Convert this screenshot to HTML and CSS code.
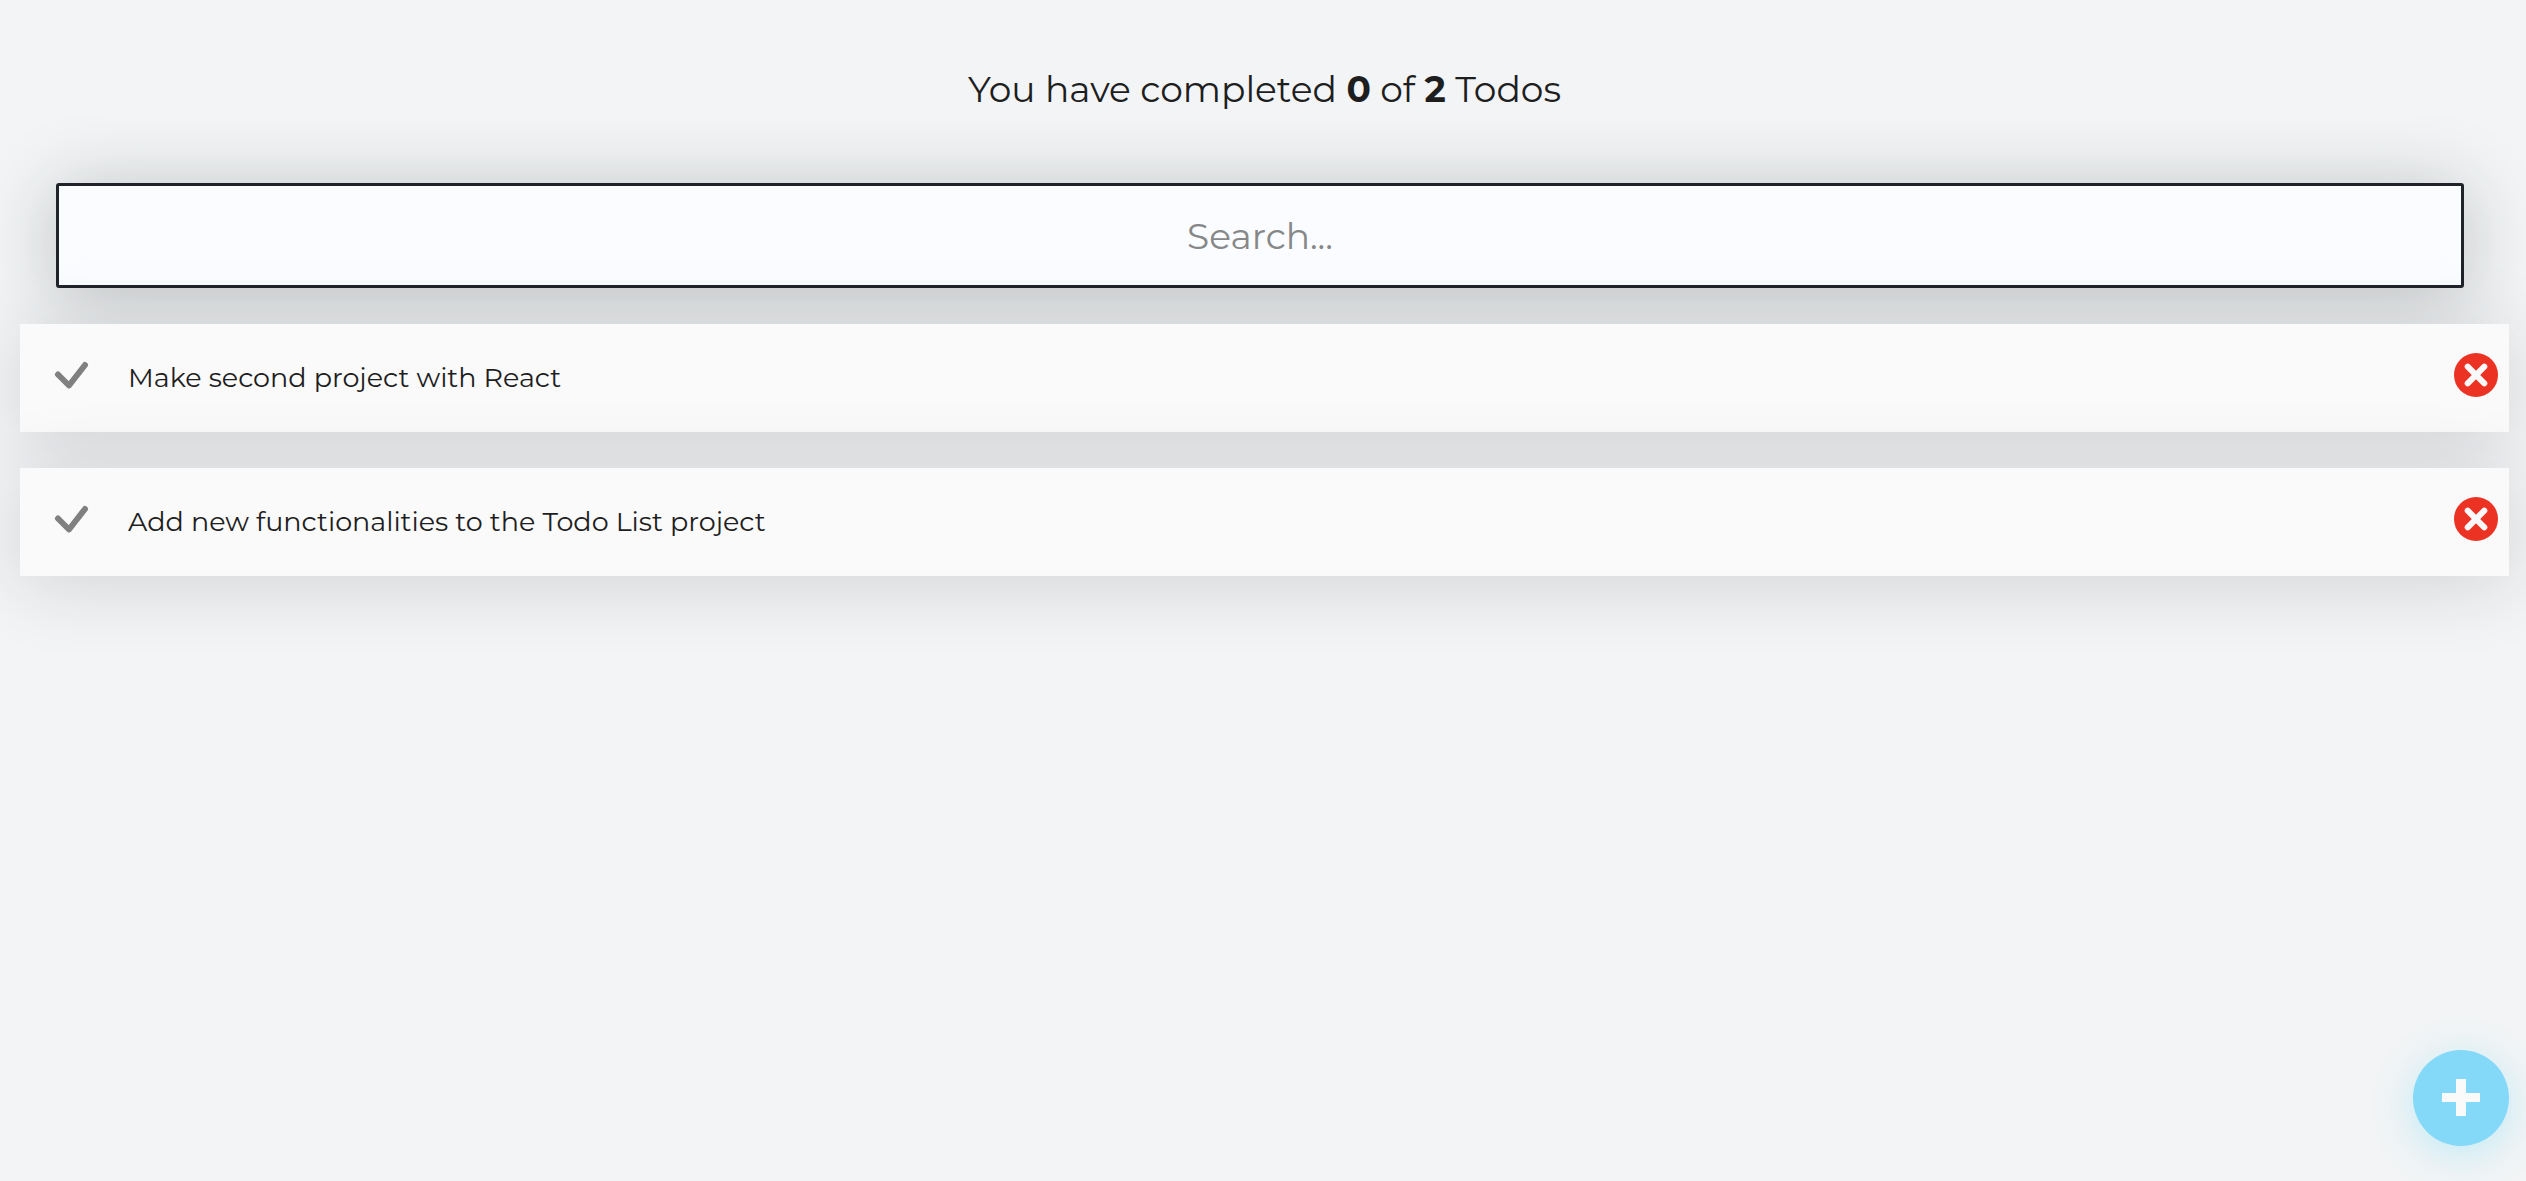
FILE: index.html
```html
<!DOCTYPE html>
<html lang="en">
<head>
  <meta charset="utf-8">
  <meta name="viewport" content="width=device-width, initial-scale=1">
  <title>Todo List</title>
  <link rel="stylesheet" href="styles.css">
</head>
<body>
  <main class="app">
    <h1 class="counter">You have completed <strong>0</strong> of <strong>2</strong> Todos</h1>
    <input class="search" type="text" placeholder="Search..." aria-label="Search todos">
    <ul class="todos">
      <li class="todo">
        <button class="icon-button" type="button" aria-label="Complete: Make second project with React">
          <svg class="check" viewBox="0 0 36 36" aria-hidden="true"><path d="M4 17.5 L15 28.5 L31 8"/></svg>
        </button>
        <p class="todo-text">Make second project with React</p>
        <button class="icon-button" type="button" aria-label="Delete: Make second project with React">
          <svg class="delete" viewBox="0 0 44 44" aria-hidden="true"><circle cx="22" cy="22" r="22"/><path d="M13.7 13.7 L30.3 30.3 M30.3 13.7 L13.7 30.3"/></svg>
        </button>
      </li>
      <li class="todo">
        <button class="icon-button" type="button" aria-label="Complete: Add new functionalities to the Todo List project">
          <svg class="check" viewBox="0 0 36 36" aria-hidden="true"><path d="M4 17.5 L15 28.5 L31 8"/></svg>
        </button>
        <p class="todo-text">Add new functionalities to the Todo List project</p>
        <button class="icon-button" type="button" aria-label="Delete: Add new functionalities to the Todo List project">
          <svg class="delete" viewBox="0 0 44 44" aria-hidden="true"><circle cx="22" cy="22" r="22"/><path d="M13.7 13.7 L30.3 30.3 M30.3 13.7 L13.7 30.3"/></svg>
        </button>
      </li>
    </ul>
  </main>
  <button class="add" type="button" aria-label="Add todo">
    <svg class="plus" viewBox="0 0 38 38" aria-hidden="true"><path d="M14 0 H24 V14 H38 V23 H24 V37 H14 V23 H0 V14 H14 Z"/></svg>
  </button>
</body>
</html>
```
FILE: styles.css
```css
* {
  box-sizing: border-box;
}

body {
  margin: 0;
  background: #f2f4f5;
  color: #1e1e1f;
  font-family: Montserrat, Inter, "Open Sans", sans-serif;
  font-weight: 400;
}

button {
  padding: 0;
  border: 0;
  background: none;
  cursor: pointer;
}

.app {
  display: flex;
  flex-direction: column;
  min-height: 100vh;
  padding: 67px 17px 36px 20px;
}

.counter {
  margin: 0 0 72px;
  font-size: 36px;
  line-height: 44px;
  font-weight: 400;
  text-align: center;
}

.counter strong {
  font-weight: 700;
}

.search {
  height: 105px;
  margin: 0 45px 0 36px;
  padding: 0 24px;
  border: 3px solid #202329;
  border-radius: 3px;
  background: #fafcff;
  box-shadow: 0 8px 75px rgba(32, 35, 41, 0.25);
  color: #1e1e1f;
  font-family: inherit;
  font-size: 36px;
  font-weight: 400;
  text-align: center;
}

.search::placeholder {
  color: #868887;
  opacity: 1;
}

.todos {
  display: flex;
  flex-direction: column;
  gap: 36px;
  margin: 36px 0 0;
  padding: 0;
  list-style: none;
}

.todo {
  display: flex;
  align-items: center;
  height: 108px;
  padding: 0 11px 0 34px;
  background: #fafafa;
  box-shadow: 0 8px 75px rgba(32, 35, 41, 0.15);
}

.todo-text {
  flex: 1;
  margin: 0 0 0 38px;
  font-size: 27px;
  line-height: 36px;
}

.icon-button {
  display: flex;
  padding-bottom: 6px;
}

.check {
  width: 36px;
  height: 36px;
  fill: none;
  stroke: #808080;
  stroke-width: 6;
  stroke-linecap: round;
  stroke-linejoin: round;
}

.delete {
  width: 44px;
  height: 44px;
  fill: #eb3223;
  stroke-linecap: round;
}

.delete path {
  stroke: #fafafa;
  stroke-width: 6;
}

.add {
  position: fixed;
  right: 17px;
  bottom: 35px;
  display: flex;
  align-items: center;
  justify-content: center;
  width: 96px;
  height: 96px;
  border-radius: 50%;
  background: #84d8f8;
  box-shadow: 0 8px 38px rgba(97, 218, 250, 0.35);
}

.plus {
  width: 38px;
  height: 38px;
  fill: #fafafa;
}
```
